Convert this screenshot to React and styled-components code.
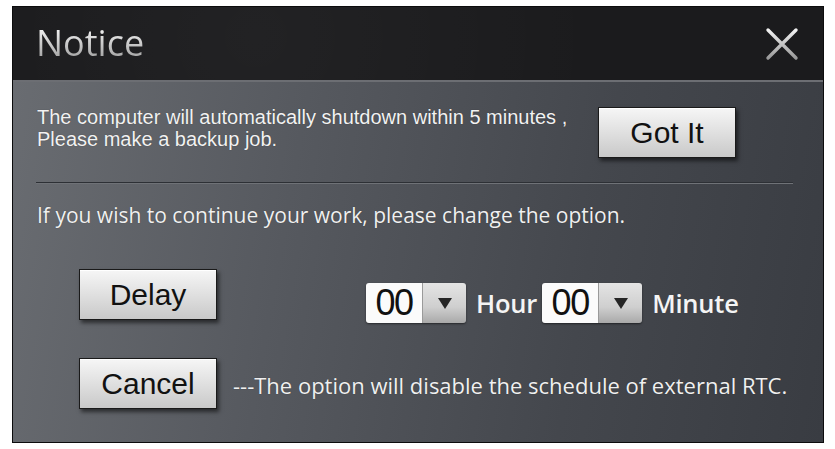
import React from 'react';
import styled, { createGlobalStyle } from 'styled-components';

const Global = createGlobalStyle`
    html, body {
        margin:0;
        background:#fff;
    }
    body{
        padding:6px 0 0 12px;
    }
`

const Window = styled.div`
    width:812px;
    height:437px;
    box-sizing:border-box;
    border:1px solid #0c0c0d;
    display:flex;
    flex-direction:column;
    background:linear-gradient(100deg,#6a6d72 0%,#56595f 35%,#44474d 70%,#393c42 100%);
`

const TitleBar = styled.div`
    height:73px;
    flex:none;
    display:flex;
    align-items:center;
    justify-content:space-between;
    padding:0 22px 0 23px;
    background:
        radial-gradient(circle at 30% 40%,rgba(255,255,255,0.03),transparent 60%),
        #1b1b1d;
    border-bottom:2px solid #6c6e73;
`

const Title = styled.h1`
    margin:0 0 2px;
    font-family:"Open Sans",sans-serif;
    font-weight:400;
    font-size:36px;
    background:linear-gradient(180deg,#f4f4f4 20%,#a0a0a0 85%);
    -webkit-background-clip:text;
    background-clip:text;
    color:transparent;
`

const Close = styled.button`
    background:none;
    border:none;
    padding:0;
    width:38px;
    height:34px;
    svg{ display:block; }
`

const Body = styled.div`
    flex:1;
    padding:0 26px 0 24px;
    display:flex;
    flex-direction:column;
`

const TopRow = styled.div`
    display:flex;
    align-items:flex-start;
    padding-top:21px;
    height:100px;
    box-sizing:border-box;
`

const Message = styled.p`
    margin:3px 0 0;
    width:561px;
    font-family:"Liberation Sans",Arial,sans-serif;
    font-size:20px;
    line-height:22px;
    color:#f2f2f2;
    text-shadow:0 0 1px rgba(0,0,0,0.4);
`

const Button = styled.button`
    width:138px;
    height:51px;
    flex:none;
    margin-top:${p => p.$top || 0}px;
    box-sizing:border-box;
    border:1px solid #1a1a1a;
    background:linear-gradient(180deg,#f6f6f6 0%,#e2e2e2 45%,#c9c9c9 100%);
    box-shadow:2px 3px 4px rgba(0,0,0,0.55), inset 0 1px 0 #fff;
    font-family:"Liberation Sans",Arial,sans-serif;
    font-size:30px;
    color:#111;
    padding:0;
    cursor:pointer;
`

const Divider = styled.hr`
    margin:0 0 0 -1px;
    width:757px;
    border:none;
    border-top:1px solid #2d3035;
    border-bottom:1px solid #6f7277;
`

const Hint = styled.p`
    margin:17px 0 0;
    font-family:"Open Sans",sans-serif;
    font-size:21px;
    color:#f0f0f0;
    text-shadow:0 0 1px rgba(0,0,0,0.4);
`

const Options = styled.div`
    display:grid;
    grid-template-columns:138px auto;
    column-gap:16px;
    row-gap:35px;
    margin:40px 0 0 42px;
    align-items:start;
`

const TimeRow = styled.div`
    display:flex;
    align-items:center;
    margin:14px 0 0 127px;
    font-family:"Open Sans",sans-serif;
    font-weight:600;
    font-size:25.5px;
    letter-spacing:-0.2px;
    color:#f4f4f4;
`

const Select = styled.div`
    display:flex;
    height:40px;
    margin:0 ${p => p.$after}px 0 ${p => p.$before}px;
    border-radius:3px;
    overflow:hidden;
    box-shadow:0 1px 2px rgba(0,0,0,0.5);
`

const Value = styled.span`
    width:56px;
    background:#fbfbfb;
    color:#111;
    font-family:"Liberation Sans",Arial,sans-serif;
    font-weight:400;
    font-size:36px;
    line-height:40px;
    letter-spacing:-1.5px;
    text-align:center;
`

const Arrow = styled.span`
    width:43px;
    background:linear-gradient(180deg,#e4e4e4 0%,#cfcfcf 60%,#a9a9a9 100%);
    border-left:1px solid #9a9a9a;
    display:flex;
    align-items:center;
    justify-content:center;
    &::after{
        content:"";
        border-left:7px solid transparent;
        border-right:7px solid transparent;
        border-top:11px solid #262626;
    }
`

const Note = styled.span`
    align-self:center;
    margin-top:2px;
    font-family:"Open Sans",sans-serif;
    font-size:22px;
    color:#f0f0f0;
    text-shadow:0 0 1px rgba(0,0,0,0.4);
`

const TimeSelect = ({ value, before = 6, after = 10 }) => (
    <Select $before={before} $after={after}>
        <Value>{value}</Value>
        <Arrow />
    </Select>
)

const App = () => {
    return (
        <Window>
            <Global />
            <TitleBar>
                <Title>Notice</Title>
                <Close aria-label="close">
                    <svg width="38" height="34" viewBox="0 0 38 34">
                        <defs>
                            <linearGradient id="xg" x1="0" y1="0" x2="0" y2="1">
                                <stop offset="0" stopColor="#f2f2f2" />
                                <stop offset="1" stopColor="#9a9a9a" />
                            </linearGradient>
                        </defs>
                        <path d="M5 3 L33 31 M33 3 L5 31" stroke="url(#xg)" strokeWidth="3.4" strokeLinecap="round" />
                    </svg>
                </Close>
            </TitleBar>
            <Body>
                <TopRow>
                    <Message>
                        The computer will automatically shutdown within 5 minutes ,<br />
                        Please make a backup job.
                    </Message>
                    <Button $top={4}>Got It</Button>
                </TopRow>
                <Divider />
                <Hint>If you wish to continue your work, please change the option.</Hint>
                <Options>
                    <Button>Delay</Button>
                    <TimeRow>
                        <TimeSelect value="00" />
                        Hour
                        <TimeSelect value="00" before={5} />
                        Minute
                    </TimeRow>
                    <Button>Cancel</Button>
                    <Note>---The option will disable the schedule of external RTC.</Note>
                </Options>
            </Body>
        </Window>
    )
}

export default App
